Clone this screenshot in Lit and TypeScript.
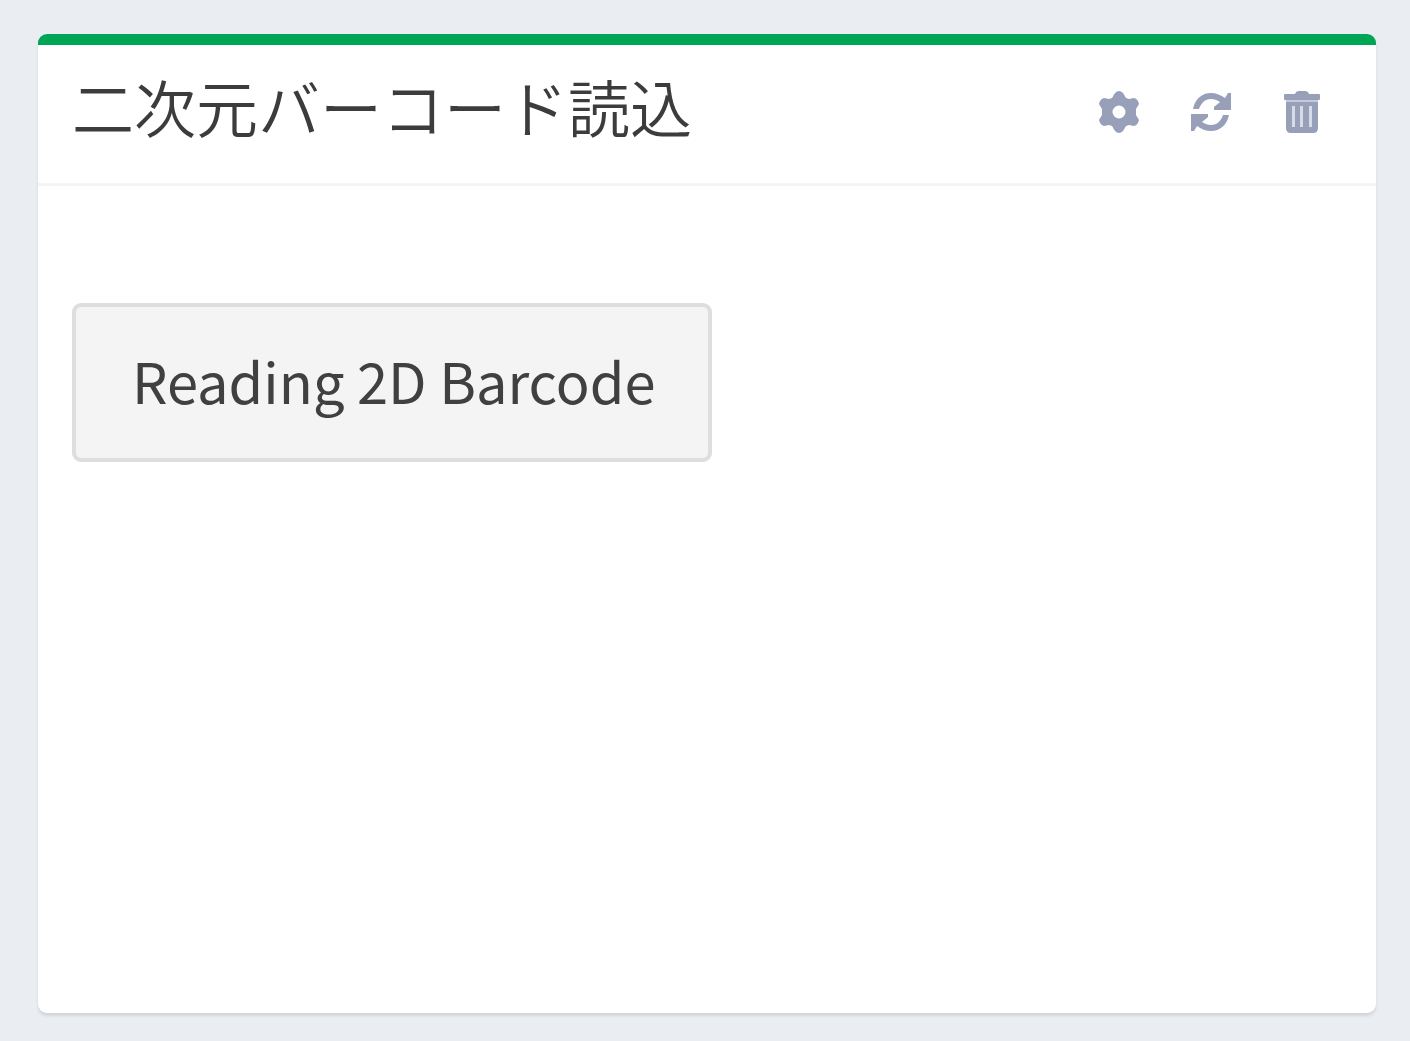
import { LitElement, html, css } from "lit";
import { customElement } from "lit/decorators.js";

@customElement("app-root")
export class AppRoot extends LitElement {
  static styles = css`
    :host {
      display: flex;
      box-sizing: border-box;
      min-height: 100vh;
      padding: 34px 34px 28px 38px;
      background: #eaeef3;
      color: #3c3c3c;
      font-family: "Noto Sans CJK JP", "Noto Sans", sans-serif;
    }
    .panel {
      flex: 1;
      display: flex;
      flex-direction: column;
      min-width: 0;
      background: #fff;
      border-top: 11px solid #00a555;
      border-radius: 9px;
      box-shadow: 0 3px 3px rgba(0, 0, 0, 0.1);
    }
    .header {
      display: flex;
      align-items: center;
      justify-content: space-between;
      gap: 24px;
      padding: 21px 43px 25px 34px;
      border-bottom: 3px solid #f4f4f4;
    }
    .title {
      margin: 0;
      padding-bottom: 12px;
      font-size: 62px;
      line-height: 80px;
      font-weight: 350;
    }
    .tools {
      display: flex;
      gap: 32px;
    }
    .tool {
      display: flex;
      padding: 8px;
      margin: 0;
      border: 0;
      background: none;
      color: #97a0b8;
      cursor: pointer;
    }
    .icon {
      display: block;
      width: 44px;
      height: 44px;
      fill: currentColor;
    }
    .slot {
      fill: #d6dce6;
    }
    .seam {
      fill: #c3cad8;
    }
    .body {
      padding: 117px 34px 34px;
    }
    .action {
      padding: 31px 52px 36px 56px;
      border: 4px solid #dedede;
      border-radius: 9px;
      background: #f4f4f4;
      color: #404040;
      font: inherit;
      font-size: 56px;
      line-height: 84px;
      cursor: pointer;
    }
  `;

  render() {
    return html`
      <section class="panel" aria-labelledby="panel-title">
        <header class="header">
          <h1 class="title" id="panel-title">二次元バーコード読込</h1>
          <div class="tools">
            <button class="tool" type="button" aria-label="Settings">
              <svg class="icon" viewBox="0 0 44 44" aria-hidden="true">
                <path
                  fill-rule="evenodd"
                  d="M18 3Q22 -1 26 3L29 8L32 9L37 8Q41 9 42 14L39 19V25L42 30Q41 35 37 36L32 35L29 36L26 41Q22 45 18 41L15 36L12 35L7 36Q3 35 2 30L5 25V19L2 14Q3 9 7 8L12 9L15 8ZM22 15.5A6.5 6.5 0 1 0 22 28.500A6.5 6.5 0 1 0 22 15.500Z"
                />
              </svg>
            </button>
            <button class="tool" type="button" aria-label="Refresh">
              <svg class="icon" viewBox="0 0 44 44" aria-hidden="true">
                <path
                  d="M4 19C6 9 13 3 22 3C27 3 32 5 36 8L39 3H42V20H25V17L31 12C28 10 25 9 22 9C16 9 12 13 10 19Z"
                />
                <path
                  d="M40 25C38 35 31 41 22 41C17 41 12 39 8 36L5 41H2V24H19V27L13 32C16 34 19 35 22 35C28 35 32 31 34 25Z"
                />
              </svg>
            </button>
            <button class="tool" type="button" aria-label="Delete">
              <svg class="icon" viewBox="0 0 44 44" aria-hidden="true">
                <path
                  d="M14 4Q15 1 18 1H24Q27 1 28 4H38Q39 4 39 5V9Q39 10 38 10H4Q3 10 3 9V5Q3 4 4 4ZM5 10H37V38Q37 43 32 43H10Q5 43 5 38Z"
                />
                <path class="seam" d="M5 10H37V12H5Z" />
                <path class="slot" d="M11 16H14V37H11ZM19 16H22V37H19ZM28 16H31V37H28Z" />
              </svg>
            </button>
          </div>
        </header>
        <div class="body">
          <button class="action" type="button">Reading 2D Barcode</button>
        </div>
      </section>
    `;
  }
}
